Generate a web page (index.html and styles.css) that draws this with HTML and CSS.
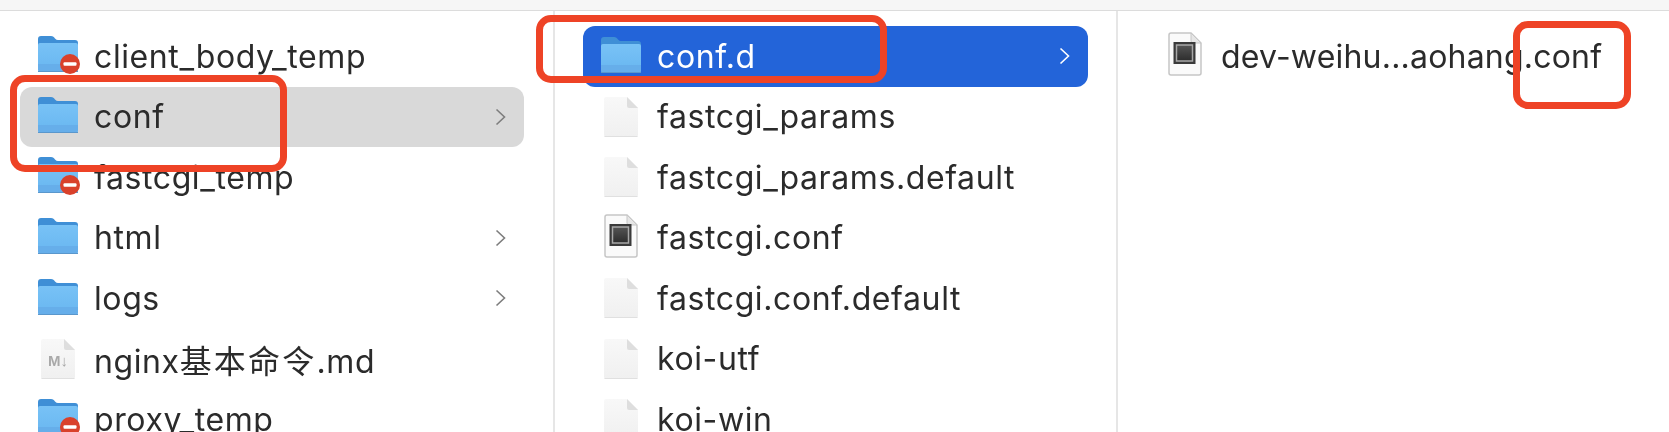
FILE: index.html
```html
<!DOCTYPE html>
<html lang="en">
<head>
    <meta charset="utf-8">
    <title>nginx</title>
    <link rel="stylesheet" href="styles.css">
</head>
<body>

<!-- shared icons -->
<svg class="defs" width="0" height="0">
    <defs>
        <linearGradient id="folderBody" x1="0" y1="0" x2="0" y2="1">
            <stop offset="0" stop-color="#78c2f6"/>
            <stop offset="1" stop-color="#68b6f0"/>
        </linearGradient>
        <linearGradient id="blankPage" x1="0" y1="0" x2="0" y2="1">
            <stop offset="0" stop-color="#f8f8f8"/>
            <stop offset="1" stop-color="#f0f0f0"/>
        </linearGradient>
        <linearGradient id="execCore" x1="0" y1="0" x2="0" y2="1">
            <stop offset="0" stop-color="#555"/>
            <stop offset="1" stop-color="#2c2c2c"/>
        </linearGradient>
        <symbol id="folder" viewBox="0 0 40 36">
            <path d="M0 3a3 3 0 0 1 3-3h10c2 0 3 1 4 2.500 1 1 2 1.500 3 1.500h17a3 3 0 0 1 3 3v10H0z" fill="#3f8fd6"/>
            <path d="M0 9a2 2 0 0 1 2-2h36a2 2 0 0 1 2 2v24a3 3 0 0 1-3 3H3a3 3 0 0 1-3-3z" fill="url(#folderBody)"/>
            <path d="M0 28h40v5a3 3 0 0 1-3 3H3a3 3 0 0 1-3-3z" fill="#66aeea"/>
            <path d="M0 35h40v1H0z" fill="#5a97cc"/>
        </symbol>
        <symbol id="folder-blocked" viewBox="0 0 44 40">
            <use href="#folder" width="40" height="36"/>
            <circle cx="32" cy="28" r="10" fill="#d9412b"/>
            <rect x="25.500" y="26.200" width="13" height="3.600" rx="1" fill="#fff"/>
        </symbol>
        <symbol id="file" viewBox="0 0 36 40">
            <path d="M1 2a2 2 0 0 1 2-2h21l11 11v27a2 2 0 0 1-2 2H3a2 2 0 0 1-2-2z" fill="url(#blankPage)"/>
            <path d="M24 0l11 11H26a2 2 0 0 1-2-2z" fill="#dedede"/>
            <path d="M1.500 39.500h33" stroke="#e0e0e0"/>
        </symbol>
        <symbol id="file-exec" viewBox="0 0 36 44">
            <path d="M2 3a2 2 0 0 1 2-2h20l10 10v30a2 2 0 0 1-2 2H4a2 2 0 0 1-2-2z" fill="#fafafa" stroke="#c6c6c6" stroke-width="1.500"/>
            <path d="M24 1l10 10h-8a2 2 0 0 1-2-2z" fill="#e6e6e6" stroke="#c6c6c6"/>
            <rect x="6.500" y="10" width="22" height="22" fill="#3a3a3a"/>
            <rect x="9.500" y="13" width="16" height="16" fill="url(#execCore)" stroke="#a8a8a8" stroke-width="1.500"/>
        </symbol>
        <symbol id="chevron" viewBox="0 0 11 18">
            <path d="M1.500 1.500l8 7.500-8 7.500" fill="none" stroke="currentColor" stroke-width="1.600"/>
        </symbol>
    </defs>
</svg>

<div class="toolbar"></div>

<main class="browser">
    <section class="column first">
        <div class="row">
            <svg class="icon blocked"><use href="#folder-blocked"/></svg>
            <span class="name">client_body_temp</span>
        </div>
        <div class="row open">
            <svg class="icon folder"><use href="#folder"/></svg>
            <span class="name">conf</span>
            <svg class="chevron"><use href="#chevron"/></svg>
        </div>
        <div class="row">
            <svg class="icon blocked"><use href="#folder-blocked"/></svg>
            <span class="name">fastcgi_temp</span>
        </div>
        <div class="row">
            <svg class="icon folder"><use href="#folder"/></svg>
            <span class="name">html</span>
            <svg class="chevron"><use href="#chevron"/></svg>
        </div>
        <div class="row">
            <svg class="icon folder"><use href="#folder"/></svg>
            <span class="name">logs</span>
            <svg class="chevron"><use href="#chevron"/></svg>
        </div>
        <div class="row">
            <svg class="icon page" viewBox="0 0 36 40">
                <use href="#file" width="36" height="40"/>
                <text class="md-mark" x="18" y="27">M↓</text>
            </svg>
            <span class="name">nginx<span class="cjk">基本命令</span>.md</span>
        </div>
        <div class="row">
            <svg class="icon blocked"><use href="#folder-blocked"/></svg>
            <span class="name">proxy_temp</span>
        </div>
    </section>

    <section class="column second">
        <div class="row selected">
            <svg class="icon folder"><use href="#folder"/></svg>
            <span class="name">conf.d</span>
            <svg class="chevron"><use href="#chevron"/></svg>
        </div>
        <div class="row">
            <svg class="icon page"><use href="#file"/></svg>
            <span class="name">fastcgi_params</span>
        </div>
        <div class="row">
            <svg class="icon page"><use href="#file"/></svg>
            <span class="name">fastcgi_params.default</span>
        </div>
        <div class="row">
            <svg class="icon exec"><use href="#file-exec"/></svg>
            <span class="name">fastcgi.conf</span>
        </div>
        <div class="row">
            <svg class="icon page"><use href="#file"/></svg>
            <span class="name">fastcgi.conf.default</span>
        </div>
        <div class="row">
            <svg class="icon page"><use href="#file"/></svg>
            <span class="name">koi-utf</span>
        </div>
        <div class="row">
            <svg class="icon page"><use href="#file"/></svg>
            <span class="name">koi-win</span>
        </div>
    </section>

    <section class="column third">
        <div class="row">
            <svg class="icon exec"><use href="#file-exec"/></svg>
            <span class="name">dev-weihu...aohang.conf</span>
        </div>
    </section>
</main>

<!-- red annotation boxes drawn over the screenshot -->
<div class="mark mark-conf"></div>
<div class="mark mark-confd"></div>
<div class="mark mark-ext"></div>

</body>
</html>
```

FILE: styles.css
```css
html, body {
    margin: 0;
    height: 432px;
    overflow: hidden;
    background-color: white;
}

body {
    position: relative;
    font-family: Inter, "Noto Sans CJK SC", sans-serif;
    font-size: 32px;
    letter-spacing: 0.6px;
    color: #2b2b2b;
}

.defs {
    display: block;
}

.toolbar {
    height: 10px;
    background-color: #f6f6f6;
    border-bottom: 1px solid #dcdcdc;
}

.browser {
    display: grid;
    grid-template-columns: 555px 563px 1fr;
    height: 421px;
    filter: blur(0.5px);
}

.column {
    box-sizing: border-box;
    padding-top: 15px;
    border-right: 2px solid #e6e6e6;
    overflow: hidden;
}

.first {
    padding-left: 20px;
    padding-right: 29px;
}

.second {
    padding-left: 28px;
    padding-right: 28px;
}

.third {
    padding-left: 29px;
    padding-right: 28px;
    border-right: none;
    letter-spacing: 0.2px;
}

.row {
    display: flex;
    align-items: center;
    box-sizing: border-box;
    height: 60.5px;
    padding: 0 18px;
    gap: 16px;
    border-radius: 12px;
}

.open {
    background-color: #d9d9d9;
}

.selected {
    background-color: #2364d9;
    color: white;
}

.icon {
    flex: none;
    width: 40px;
    height: 36px;
    margin-top: -3px;
    overflow: visible;
}

.blocked {
    width: 44px;
    height: 40px;
    margin-top: -1px;
    margin-right: -4px;
}

.page {
    height: 40px;
    margin-top: 0;
}

.exec {
    height: 44px;
    margin-top: -4px;
}

.name {
    white-space: nowrap;
}

.cjk {
    letter-spacing: 2.200px;
}

.chevron {
    flex: none;
    width: 11px;
    height: 18px;
    margin-left: auto;
    color: #7d7d7d;
}

.selected .chevron {
    color: white;
}

.md-mark {
    font-family: "Liberation Sans", sans-serif;
    font-size: 15px;
    font-weight: bold;
    letter-spacing: 0;
    text-anchor: middle;
    fill: #a9a9a9;
}

.mark {
    position: absolute;
    box-sizing: border-box;
    border: 7px solid #ee4326;
    border-radius: 15px;
}

.mark-conf {
    left: 10px;
    top: 75px;
    width: 277px;
    height: 97px;
}

.mark-confd {
    left: 536px;
    top: 15px;
    width: 351px;
    height: 68px;
}

.mark-ext {
    left: 1513px;
    top: 21px;
    width: 118px;
    height: 88px;
}
```
